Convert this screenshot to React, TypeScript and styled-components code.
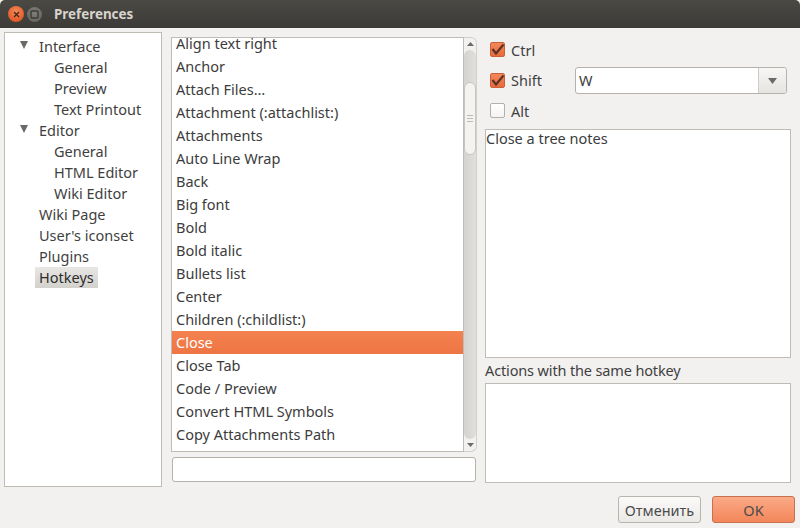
import React from 'react';
import styled, { createGlobalStyle } from 'styled-components';

const GlobalStyle = createGlobalStyle`
  html, body {
    margin: 0;
    padding: 0;
    width: 800px;
    height: 528px;
    overflow: hidden;
    background: #f2f1f0;
  }
  * {
    box-sizing: border-box;
  }
`;

const Window = styled.div`
  width: 800px;
  height: 528px;
  display: flex;
  flex-direction: column;
  background: #f2f1f0;
  color: #3c3c3c;
  font-family: 'Noto Sans', 'Open Sans', sans-serif;
  font-size: 14.5px;
`;

const TitleBar = styled.div`
  height: 28px;
  flex: none;
  display: flex;
  align-items: center;
  padding-left: 8px;
  background: linear-gradient(#4a4944, #3c3b37);
  border-radius: 5px 5px 0 0;
`;

const WindowButton = styled.div<{ $close?: boolean }>`
  width: ${(p) => (p.$close ? '16px' : '15px')};
  height: ${(p) => (p.$close ? '16px' : '15px')};
  margin-right: 3px;
  border-radius: 50%;
  display: flex;
  align-items: center;
  justify-content: center;
  background: ${(p) =>
    p.$close
      ? 'radial-gradient(circle at 50% 35%, #f38a5c, #dd4814)'
      : 'radial-gradient(circle at 50% 35%, #807f79, #5f5e58)'};
`;

const TitleText = styled.div`
  margin-left: 9px;
  color: #d8d4cc;
  font-size: 13.4px;
  font-weight: 700;
`;

const Body = styled.div`
  flex: 1;
  min-height: 0;
  display: flex;
  padding: 4px 9px 0 4px;
`;

const TreePanel = styled.div`
  width: 158px;
  height: 455px;
  flex: none;
  padding-top: 3px;
  background: #fff;
  border: 1px solid #bfbbb5;
`;

const TreeRow = styled.div<{ $depth: number }>`
  height: 21px;
  display: flex;
  align-items: center;
  padding-left: ${(p) => 14 + p.$depth * 15}px;
`;

const ExpanderSlot = styled.div`
  width: 16px;
  height: 21px;
  flex: none;
  padding: 5px 0 0 1px;
`;

const Expander = styled.svg`
  display: block;
  width: 8px;
  height: 8px;
`;

const TreeLabel = styled.span<{ $current?: boolean }>`
  padding: 0 4px;
  line-height: 21px;
  color: ${(p) => (p.$current ? '#2c2c2c' : '#3f3f3f')};
  background: ${(p) => (p.$current ? 'linear-gradient(#e8e7e4, #d3d1cc)' : 'transparent')};
`;

const ListColumn = styled.div`
  width: 306px;
  height: 445px;
  flex: none;
  margin: 5px 0 0 9px;
  display: flex;
  flex-direction: column;
`;

const ListArea = styled.div`
  flex: none;
  display: flex;
`;

const ActionList = styled.div`
  width: 293px;
  height: 415px;
  flex: none;
  overflow: hidden;
  background: #fff;
  border: 1px solid #bfbbb5;
`;

const ActionRow = styled.div<{ $selected?: boolean }>`
  height: 23px;
  line-height: 23px;
  padding-left: 4px;
  white-space: nowrap;
  color: ${(p) => (p.$selected ? '#fff' : '#3c3c3c')};
  background: ${(p) => (p.$selected ? 'linear-gradient(#f3824f, #ee7544)' : 'transparent')};
  &:first-child {
    margin-top: -6px;
  }
`;

const ScrollBar = styled.div`
  width: 13px;
  height: 415px;
  flex: none;
  display: flex;
  flex-direction: column;
  align-items: center;
  border: 1px solid #d3d0cb;
  border-left: none;
  border-radius: 0 6px 6px 0;
  background: #f2f1f0;
`;

const ScrollArrow = styled.svg`
  width: 7px;
  height: 4px;
  flex: none;
  margin: 4px 0;
`;

const ScrollTrack = styled.div`
  flex: 1;
  width: 12px;
  padding-top: 32px;
  border-radius: 6px;
  background: linear-gradient(90deg, #d5d3cf, #e0dfdb);
`;

const ScrollThumb = styled.div`
  width: 12px;
  height: 73px;
  display: flex;
  flex-direction: column;
  align-items: center;
  justify-content: center;
  gap: 2px;
  border: 1px solid #c9c6c1;
  border-radius: 6px;
  background: #f4f3f1;
`;

const Grip = styled.div`
  width: 6px;
  height: 1px;
  background: #bdbab5;
`;

const SearchInput = styled.div`
  height: 25px;
  flex: none;
  margin: 5px 1px 0 1px;
  background: #fff;
  border: 1px solid #b5b1ab;
  border-radius: 3px;
`;

const SidePanel = styled.div`
  flex: 1;
  min-width: 0;
  margin: 2.5px 0 0 8px;
  display: flex;
  flex-direction: column;
`;

const KeyRow = styled.div`
  height: 30.5px;
  flex: none;
  display: flex;
  align-items: center;
  padding-left: 5px;
`;

const CheckBox = styled.div<{ $checked?: boolean }>`
  width: 15px;
  height: 15px;
  flex: none;
  margin-right: 6px;
  display: flex;
  align-items: center;
  justify-content: center;
  border-radius: 2px;
  border: 1px solid ${(p) => (p.$checked ? '#c9603a' : '#b3afa9')};
  background: ${(p) => (p.$checked ? 'linear-gradient(#f4875a, #e76a3a)' : 'linear-gradient(#fff, #f4f3f2)')};
`;

const CheckMark = styled.svg`
  width: 13px;
  height: 13px;
  flex: none;
  overflow: visible;
`;

const KeyLabel = styled.span`
  width: 45px;
  color: #3f3f3f;
`;

const KeyCombo = styled.div`
  width: 212px;
  height: 27px;
  margin: 1px 0 0 19px;
  display: flex;
  background: #fff;
  border: 1px solid #b5b1ab;
  border-radius: 3px;
`;

const KeyValue = styled.div`
  flex: 1;
  padding-left: 3px;
  line-height: 25px;
`;

const ComboButton = styled.div`
  width: 28px;
  display: flex;
  align-items: center;
  justify-content: center;
  border-left: 1px solid #cfccc7;
  border-radius: 0 3px 3px 0;
  background: linear-gradient(#f7f6f5, #e6e4e1);
`;

const TextPanel = styled.div<{ $height: number; $top?: number }>`
  width: 306px;
  height: ${(p) => p.$height}px;
  margin-top: ${(p) => p.$top ?? 0}px;
  flex: none;
  padding: 0;
  line-height: 17px;
  background: #fff;
  border: 1px solid #bfbbb5;
`;

const SectionLabel = styled.div`
  height: 25px;
  line-height: 25px;
  flex: none;
  color: #3f3f3f;
  letter-spacing: -0.14px;
`;

const Footer = styled.div`
  height: 37px;
  flex: none;
  display: flex;
  justify-content: flex-end;
  gap: 11px;
  padding: 5px 5px 0 0;
`;

const DialogButton = styled.div<{ $primary?: boolean }>`
  width: 83px;
  height: 27px;
  display: flex;
  align-items: center;
  justify-content: center;
  border-radius: 3px;
  color: #4c4c4c;
  border: 1px solid ${(p) => (p.$primary ? '#c9714c' : '#b8b5af')};
  background: ${(p) => (p.$primary ? 'linear-gradient(#fbaa88, #f3865a)' : 'linear-gradient(#fbfaf9, #ebe9e6)')};
`;

const treeItems = [
  { label: 'Interface', depth: 0, expander: true },
  { label: 'General', depth: 1 },
  { label: 'Preview', depth: 1 },
  { label: 'Text Printout', depth: 1 },
  { label: 'Editor', depth: 0, expander: true },
  { label: 'General', depth: 1 },
  { label: 'HTML Editor', depth: 1 },
  { label: 'Wiki Editor', depth: 1 },
  { label: 'Wiki Page', depth: 0 },
  { label: "User's iconset", depth: 0 },
  { label: 'Plugins', depth: 0 },
  { label: 'Hotkeys', depth: 0, current: true },
];

const actions = [
  'Align text right',
  'Anchor',
  'Attach Files…',
  'Attachment (:attachlist:)',
  'Attachments',
  'Auto Line Wrap',
  'Back',
  'Big font',
  'Bold',
  'Bold italic',
  'Bullets list',
  'Center',
  'Children (:childlist:)',
  'Close',
  'Close Tab',
  'Code / Preview',
  'Convert HTML Symbols',
  'Copy Attachments Path',
];

const Check = () => (
  <CheckMark viewBox="0 0 13 13">
    <path d="M1.5 6 L5 10.5 L12.5 1.5" fill="none" stroke="#5a3226" strokeWidth="2.2" />
  </CheckMark>
);

const Triangle = ({ color }: { color: string }) => (
  <svg width="9" height="6" viewBox="0 0 9 6">
    <path d="M0 0 H9 L4.5 6 Z" fill={color} />
  </svg>
);

export default function App() {
  return (
    <Window>
      <GlobalStyle />
      <TitleBar>
        <WindowButton $close>
          <svg width="7" height="7" viewBox="0 0 7 7">
            <path d="M1 1 L6 6 M6 1 L1 6" stroke="#4a2412" strokeWidth="1.3" />
          </svg>
        </WindowButton>
        <WindowButton>
          <svg width="9" height="9" viewBox="0 0 9 9">
            <rect x="1" y="1" width="7" height="7" rx="1" fill="none" stroke="#3c3b37" strokeWidth="1.4" />
          </svg>
        </WindowButton>
        <TitleText>Preferences</TitleText>
      </TitleBar>
      <Body>
        <TreePanel>
          {treeItems.map((item, i) => (
            <TreeRow key={i} $depth={item.depth}>
              <ExpanderSlot>
                {item.expander && (
                  <Expander viewBox="0 0 8 8">
                    <path d="M0 0 H8 L4 8 Z" fill="#6a6a66" />
                  </Expander>
                )}
              </ExpanderSlot>
              <TreeLabel $current={item.current}>{item.label}</TreeLabel>
            </TreeRow>
          ))}
        </TreePanel>
        <ListColumn>
          <ListArea>
            <ActionList>
              {actions.map((name) => (
                <ActionRow key={name} $selected={name === 'Close'}>
                  {name}
                </ActionRow>
              ))}
            </ActionList>
            <ScrollBar>
              <ScrollArrow viewBox="0 0 7 4">
                <path d="M0 4 H7 L3.5 0 Z" fill="#6a6a66" />
              </ScrollArrow>
              <ScrollTrack>
                <ScrollThumb>
                  <Grip />
                  <Grip />
                  <Grip />
                </ScrollThumb>
              </ScrollTrack>
              <ScrollArrow viewBox="0 0 7 4">
                <path d="M0 0 H7 L3.5 4 Z" fill="#6a6a66" />
              </ScrollArrow>
            </ScrollBar>
          </ListArea>
          <SearchInput />
        </ListColumn>
        <SidePanel>
          <KeyRow>
            <CheckBox $checked>
              <Check />
            </CheckBox>
            <KeyLabel>Ctrl</KeyLabel>
          </KeyRow>
          <KeyRow>
            <CheckBox $checked>
              <Check />
            </CheckBox>
            <KeyLabel>Shift</KeyLabel>
            <KeyCombo>
              <KeyValue>W</KeyValue>
              <ComboButton>
                <Triangle color="#6a6a66" />
              </ComboButton>
            </KeyCombo>
          </KeyRow>
          <KeyRow>
            <CheckBox />
            <KeyLabel>Alt</KeyLabel>
          </KeyRow>
          <TextPanel $height={229} $top={3}>
            Close a tree notes
          </TextPanel>
          <SectionLabel>Actions with the same hotkey</SectionLabel>
          <TextPanel $height={100} />
        </SidePanel>
      </Body>
      <Footer>
        <DialogButton>Отменить</DialogButton>
        <DialogButton $primary>OK</DialogButton>
      </Footer>
    </Window>
  );
}
